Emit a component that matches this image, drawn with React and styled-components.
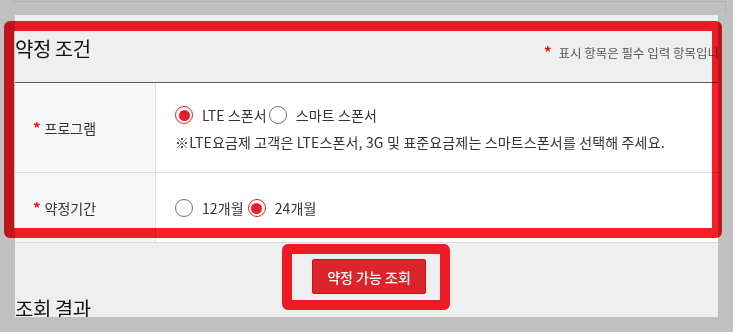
import React from "react";
import styled, { createGlobalStyle } from "styled-components";

const GlobalStyle = createGlobalStyle`
  html, body {
    margin: 0;
    padding: 0;
    background: #c0c0c0;
  }
  body {
    font-family: "Noto Sans CJK KR", "Noto Sans", sans-serif;
    color: #333;
  }
  * { box-sizing: border-box; }
`;

export default function App() {
  return (
    <>
      <GlobalStyle />
      <Screen>
        <Page>
          <Header>
            <Title>약정 조건</Title>
            <Required>
              <Star>*</Star> 표시 항목은 필수 입력 항목입니다.
            </Required>
          </Header>

          <FormRow $height={89}>
            <LabelCell>
              <Star>*</Star>
              <span>프로그램</span>
            </LabelCell>
            <ValueCell>
              <Options>
                <Option checked label="LTE 스폰서" />
                <Option label="스마트 스폰서" />
              </Options>
              <Help>※LTE요금제 고객은 LTE스폰서, 3G 및 표준요금제는 스마트스폰서를 선택해 주세요.</Help>
            </ValueCell>
          </FormRow>

          <FormRow $height={69}>
            <LabelCell>
              <Star>*</Star>
              <span>약정기간</span>
            </LabelCell>
            <ValueCell>
              <Options $gap={4}>
                <Option label="12개월" />
                <Option checked label="24개월" />
              </Options>
            </ValueCell>
          </FormRow>

          <ButtonRow>
            <SearchButton type="button">약정 가능 조회</SearchButton>
          </ButtonRow>

          <Title $result>조회 결과</Title>
        </Page>

        {/* annotation marks drawn over the capture */}
        <Mark $left={4} $top={21} $width={718} $height={217} />
        <Mark $left={282} $top={244} $width={168} $height={66} />
      </Screen>
    </>
  );
}

function Option({ checked, label }) {
  return (
    <OptionItem>
      <Radio $checked={checked} />
      <OptionText>{label}</OptionText>
    </OptionItem>
  );
}

const Screen = styled.div`
  position: relative;
  width: 733px;
  height: 332px;
  overflow: hidden;
  padding: 15px 0 0 15px;
  &::before {
    content: "";
    position: absolute;
    top: 1px;
    left: 13px;
    width: 712px;
    height: 1px;
    background: #b3b3b3;
  }
  &::after {
    content: "";
    position: absolute;
    top: 0;
    left: 725px;
    width: 1px;
    height: 12px;
    background: #b3b3b3;
  }
`;

const Page = styled.div`
  width: 703px;
  height: 302px;
  overflow: hidden;
  background: #efefef;
`;

const Header = styled.div`
  display: grid;
  grid-template-columns: 529px 1fr;
  align-items: center;
  height: 68px;
  padding-top: 1px;
  border-bottom: 1px solid #5c5c5c;
`;

const Title = styled.h2`
  margin: ${(p) => (p.$result ? "1px 0 0" : "0")};
  font-size: 20px;
  font-weight: 400;
  line-height: 28px;
  color: #111;
  letter-spacing: -0.5px;
`;

const Required = styled.p`
  margin: 4px 0 0;
  font-size: 12.5px;
  color: #555;
  white-space: nowrap;
`;

const Star = styled.span`
  color: #e8141c;
  font-weight: 700;
  font-size: 15px;
  margin-right: 4px;
`;

const FormRow = styled.div`
  display: grid;
  grid-template-columns: 141px 1fr;
  min-height: ${(p) => p.$height + 1}px;
  border-bottom: 1px solid #dcdcdc;
`;

const LabelCell = styled.div`
  display: flex;
  align-items: center;
  padding-left: 18px;
  background: #f6f6f6;
  border-right: 1px solid #e2e2e2;
  font-size: 14px;
  color: #333;
`;

const ValueCell = styled.div`
  display: flex;
  flex-direction: column;
  justify-content: center;
  gap: 6px;
  padding: 1px 0 0 19px;
  background: #fff;
`;

const Options = styled.div`
  display: flex;
  align-items: center;
  gap: ${(p) => p.$gap ?? 2}px;
`;

const OptionItem = styled.label`
  display: inline-flex;
  align-items: center;
  height: 21px;
`;

const Radio = styled.span`
  position: relative;
  flex: none;
  width: 18px;
  height: 18px;
  border-radius: 50%;
  background: #fff;
  border: ${(p) => (p.$checked ? "1.5px solid #e3212a" : "1px solid #707070")};
  &::after {
    content: "";
    display: ${(p) => (p.$checked ? "block" : "none")};
    position: absolute;
    inset: 2.5px;
    border-radius: 50%;
    background: #e3212a;
  }
`;

const OptionText = styled.span`
  margin-left: 9px;
  font-size: 14px;
  letter-spacing: 0.1px;
  color: #333;
`;

const Help = styled.p`
  margin: 0;
  font-size: 14px;
  letter-spacing: 0.15px;
  color: #333;
  white-space: nowrap;
`;

const ButtonRow = styled.div`
  display: flex;
  padding: 16px 0 0 297px;
`;

const SearchButton = styled.button`
  width: 114px;
  height: 35px;
  border: 1px solid #c4141b;
  border-radius: 2px;
  background: #dc252b;
  color: #fff;
  font-family: inherit;
  font-size: 14px;
  font-weight: 500;
`;

const Mark = styled.div`
  position: absolute;
  left: ${(p) => p.$left}px;
  top: ${(p) => p.$top}px;
  width: ${(p) => p.$width}px;
  height: ${(p) => p.$height}px;
  border: 10px solid #fd1d26;
  border-radius: 6px;
  mix-blend-mode: multiply;
  pointer-events: none;
`;
